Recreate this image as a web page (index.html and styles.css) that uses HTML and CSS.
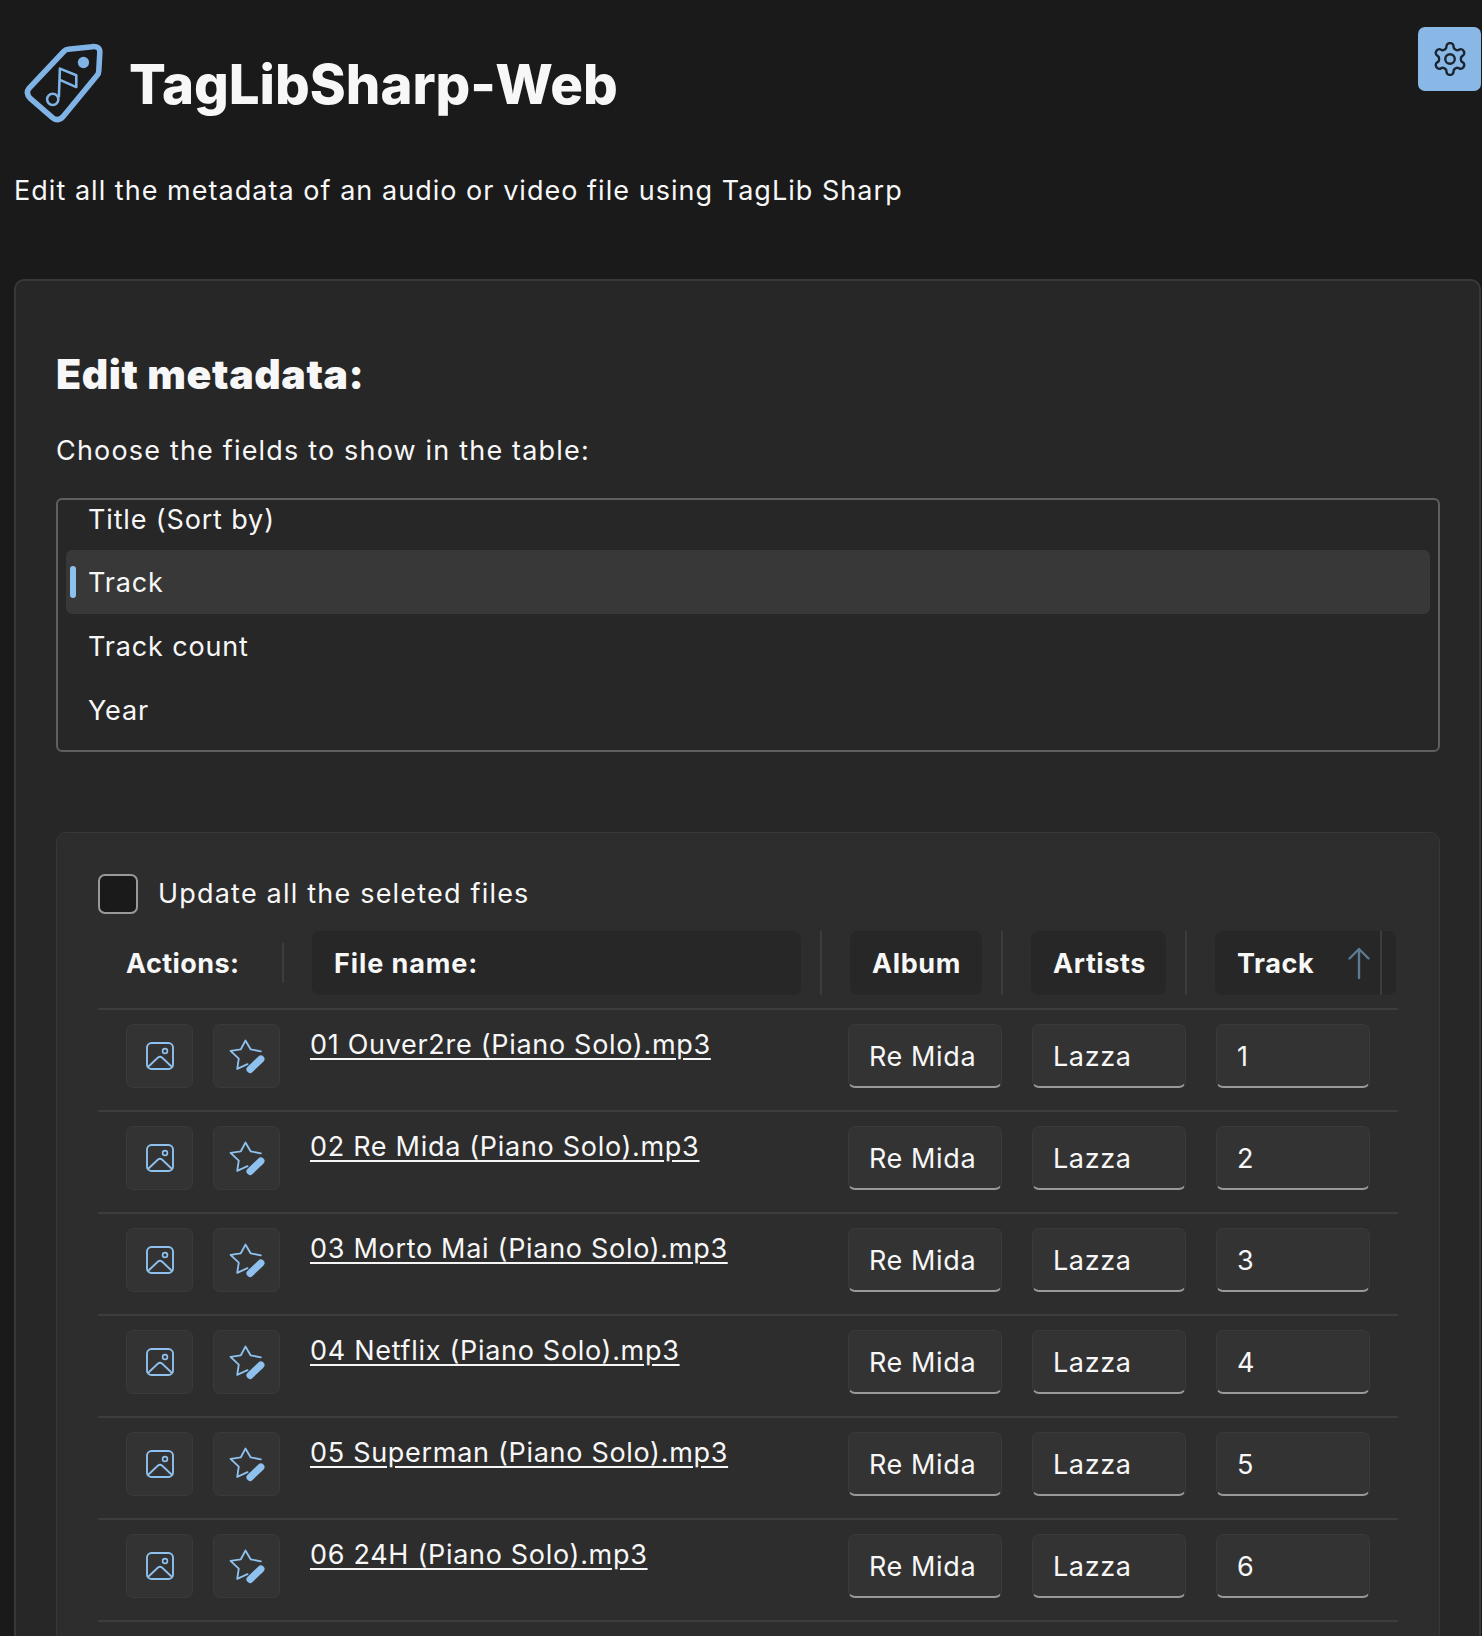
FILE: index.html
```html
<!DOCTYPE html>
<html lang="en">
<head>
    <meta charset="UTF-8">
    <title>TagLibSharp-Web</title>
    <link rel="stylesheet" href="styles.css">
</head>
<body>
    <svg width="0" height="0" class="defs">
        <symbol id="ico-image" viewBox="0 0 28 28">
            <rect x="1" y="1" width="26" height="26" rx="4.5" fill="none" stroke="currentColor" stroke-width="1.9"/>
            <circle cx="19" cy="9" r="2.4" fill="none" stroke="currentColor" stroke-width="1.7"/>
            <path d="M2 25 L12 15.500 Q14 14 16 15.500 L26 25" fill="none" stroke="currentColor" stroke-width="1.8"/>
        </symbol>
        <symbol id="ico-star" viewBox="0 0 36 36">
            <path d="M18 25.500 L8 30 L9.500 20 L1.500 12.500 L11.500 11 L16 2.500 L21 11 L31 13" fill="none" stroke="currentColor" stroke-width="1.800" stroke-linejoin="round" stroke-linecap="round"/>
            <path d="M20.500 30.500 L31 20.500" fill="none" stroke="currentColor" stroke-width="7" stroke-linecap="round"/>
        </symbol>
    </svg>

    <button class="settings" type="button" aria-label="Settings">
        <svg width="38" height="38" viewBox="0 0 24 24" fill="none" stroke="#1a2530" stroke-width="1.5" stroke-linejoin="round">
            <path d="M12.22 2h-.44a2 2 0 0 0-2 2v.18a2 2 0 0 1-1 1.73l-.43.25a2 2 0 0 1-2 0l-.15-.08a2 2 0 0 0-2.73.73l-.22.38a2 2 0 0 0 .73 2.73l.15.1a2 2 0 0 1 1 1.72v.51a2 2 0 0 1-1 1.74l-.15.09a2 2 0 0 0-.73 2.73l.22.38a2 2 0 0 0 2.73.73l.15-.08a2 2 0 0 1 2 0l.43.25a2 2 0 0 1 1 1.73V20a2 2 0 0 0 2 2h.44a2 2 0 0 0 2-2v-.18a2 2 0 0 1 1-1.73l.43-.25a2 2 0 0 1 2 0l.15.08a2 2 0 0 0 2.73-.73l.22-.39a2 2 0 0 0-.73-2.73l-.15-.08a2 2 0 0 1-1-1.74v-.5a2 2 0 0 1 1-1.74l.15-.09a2 2 0 0 0 .73-2.73l-.22-.38a2 2 0 0 0-2.73-.73l-.15.08a2 2 0 0 1-2 0l-.43-.25a2 2 0 0 1-1-1.73V4a2 2 0 0 0-2-2z"/>
            <circle cx="12" cy="12" r="3"/>
        </svg>
    </button>

    <header class="top">
        <svg class="logo" width="86" height="86" viewBox="22 42 84 84" fill="none" stroke="#80b4e6">
            <path d="M68 50 L92 47.500 Q99 47 99 53 L98 71 Q98 74 96 76 L63 116 Q58 121 53 117 L31 98 Q26 93 30 88 L64 52 Q66 50 68 50 Z" stroke-width="5.400" stroke-linejoin="round"/>
            <circle cx="83" cy="63" r="5.500" fill="#80b4e6" stroke="none"/>
            <circle cx="53" cy="99" r="5.500" stroke-width="2.500"/>
            <path d="M59 97 L60 69 L76 75.500 L76 87 L60 80" stroke-width="2.500" stroke-linejoin="round"/>
        </svg>
        <h1>TagLibSharp-Web</h1>
    </header>
    <p class="subtitle">Edit all the metadata of an audio or video file using TagLib Sharp</p>

    <main class="card">
        <h2>Edit metadata:</h2>
        <p class="hint">Choose the fields to show in the table:</p>

        <div class="listbox">
            <div class="option option-cut">Title (Sort by)</div>
            <div class="option selected">Track</div>
            <div class="option">Track count</div>
            <div class="option">Year</div>
        </div>

        <section class="inner">
            <label class="check">
                <span class="box"></span>
                Update all the seleted files
            </label>

            <table>
                <colgroup>
                    <col class="c-actions">
                    <col class="c-file">
                    <col class="c-album">
                    <col class="c-artists">
                    <col class="c-track">
                </colgroup>
                <thead>
                    <tr>
                        <th>
                            <div class="th-wrap wrap-actions">
                                <span class="th-label plain">Actions:</span>
                                <i class="divider"></i>
                            </div>
                        </th>
                        <th>
                            <div class="th-wrap wrap-file">
                                <span class="th-label">File name:</span>
                                <i class="divider"></i>
                            </div>
                        </th>
                        <th>
                            <div class="th-wrap">
                                <span class="th-label">Album</span>
                                <i class="divider"></i>
                            </div>
                        </th>
                        <th>
                            <div class="th-wrap wrap-artists">
                                <span class="th-label">Artists</span>
                                <i class="divider"></i>
                            </div>
                        </th>
                        <th>
                            <div class="th-wrap wrap-track">
                                <span class="th-label sorted">
                                    Track
                                    <svg width="24" height="34" viewBox="0 0 24 34" fill="none" stroke="#5b7a94" stroke-width="2.400" stroke-linecap="round" stroke-linejoin="round"><path d="M12 32 V3 M2.500 12.500 L12 3 L21.500 12.500"/></svg>
                                </span>
                                <i class="divider"></i>
                                <span class="th-tail"></span>
                            </div>
                        </th>
                    </tr>
                </thead>
                <tbody>
                    <tr>
                        <td><div class="acts"><button type="button" class="act"><svg class="i-img"><use href="#ico-image"/></svg></button><button type="button" class="act"><svg class="i-star"><use href="#ico-star"/></svg></button></div></td>
                        <td class="file"><a href="#">01 Ouver2re (Piano Solo).mp3</a></td>
                        <td class="f-album"><input type="text" value="Re Mida"></td>
                        <td class="f-artists"><input type="text" value="Lazza"></td>
                        <td class="f-track"><input type="text" value="1"></td>
                    </tr>
                    <tr>
                        <td><div class="acts"><button type="button" class="act"><svg class="i-img"><use href="#ico-image"/></svg></button><button type="button" class="act"><svg class="i-star"><use href="#ico-star"/></svg></button></div></td>
                        <td class="file"><a href="#">02 Re Mida (Piano Solo).mp3</a></td>
                        <td class="f-album"><input type="text" value="Re Mida"></td>
                        <td class="f-artists"><input type="text" value="Lazza"></td>
                        <td class="f-track"><input type="text" value="2"></td>
                    </tr>
                    <tr>
                        <td><div class="acts"><button type="button" class="act"><svg class="i-img"><use href="#ico-image"/></svg></button><button type="button" class="act"><svg class="i-star"><use href="#ico-star"/></svg></button></div></td>
                        <td class="file"><a href="#">03 Morto Mai (Piano Solo).mp3</a></td>
                        <td class="f-album"><input type="text" value="Re Mida"></td>
                        <td class="f-artists"><input type="text" value="Lazza"></td>
                        <td class="f-track"><input type="text" value="3"></td>
                    </tr>
                    <tr>
                        <td><div class="acts"><button type="button" class="act"><svg class="i-img"><use href="#ico-image"/></svg></button><button type="button" class="act"><svg class="i-star"><use href="#ico-star"/></svg></button></div></td>
                        <td class="file"><a href="#">04 Netflix (Piano Solo).mp3</a></td>
                        <td class="f-album"><input type="text" value="Re Mida"></td>
                        <td class="f-artists"><input type="text" value="Lazza"></td>
                        <td class="f-track"><input type="text" value="4"></td>
                    </tr>
                    <tr>
                        <td><div class="acts"><button type="button" class="act"><svg class="i-img"><use href="#ico-image"/></svg></button><button type="button" class="act"><svg class="i-star"><use href="#ico-star"/></svg></button></div></td>
                        <td class="file"><a href="#">05 Superman (Piano Solo).mp3</a></td>
                        <td class="f-album"><input type="text" value="Re Mida"></td>
                        <td class="f-artists"><input type="text" value="Lazza"></td>
                        <td class="f-track"><input type="text" value="5"></td>
                    </tr>
                    <tr>
                        <td><div class="acts"><button type="button" class="act"><svg class="i-img"><use href="#ico-image"/></svg></button><button type="button" class="act"><svg class="i-star"><use href="#ico-star"/></svg></button></div></td>
                        <td class="file"><a href="#">06 24H (Piano Solo).mp3</a></td>
                        <td class="f-album"><input type="text" value="Re Mida"></td>
                        <td class="f-artists"><input type="text" value="Lazza"></td>
                        <td class="f-track"><input type="text" value="6"></td>
                    </tr>
                </tbody>
            </table>
        </section>
    </main>
</body>
</html>
```

FILE: styles.css
```css
*{ box-sizing: border-box; }
html, body{ margin: 0; padding: 0; height: 100vh; overflow: hidden; }
body{
    background-color: #1a1a1a;
    color: #f7f7f7;
    font-family: "Inter", "Liberation Sans", sans-serif;
    font-size: 27px;
    letter-spacing: 0.6px;
}
.defs{ position: absolute; }

.settings{
    position: absolute;
    top: 27px;
    right: 1px;
    width: 63px;
    height: 64px;
    display: flex;
    align-items: center;
    justify-content: center;
    padding: 0;
    background: #8ab8e6;
    border: none;
    border-radius: 7px;
}

.top{
    display: flex;
    align-items: center;
    padding: 42px 0 0 21px;
    height: 126px;
}
.logo{ flex: none; }
h1{
    margin: 0 0 0 22px;
    font-size: 54.500px;
    font-weight: 800;
    letter-spacing: 0;
}
.subtitle{
    margin: 0;
    padding: 49px 0 0 14px;
    line-height: 32px;
    letter-spacing: 1.03px;
}

.card{
    margin: 72px 1px 0 14px;
    padding: 0 39px 0 40px;
    height: 1400px;
    background: #272727;
    border: 2px solid #383838;
    border-radius: 10px;
}
h2{
    margin: 0;
    padding-top: 70px;
    font-size: 41px;
    line-height: 46px;
    font-weight: 900;
    letter-spacing: 0.6px;
}
.hint{
    margin: 0;
    padding-top: 38px;
    line-height: 32px;
    letter-spacing: 1.18px;
}

.listbox{
    margin-top: 31px;
    height: 254px;
    padding: 0 8px;
    border: 2px solid #5f5f5f;
    border-radius: 6px;
    overflow: hidden;
    letter-spacing: 0.85px;
}
.option{
    height: 64px;
    line-height: 66px;
    padding-left: 22px;
    border-radius: 6px;
}
.option-cut{
    height: 50px;
    line-height: 40px;
}
.selected{
    position: relative;
    background: #383838;
}
.selected::before{
    content: "";
    position: absolute;
    left: 4px;
    top: 16px;
    width: 6px;
    height: 32px;
    border-radius: 3px;
    background: #8fc1ee;
}

.inner{
    margin-top: 80px;
    padding: 40px 41px 0;
    height: 900px;
    background: #2d2d2d;
    border: 1px solid #383838;
    border-radius: 10px;
}
.check{
    display: flex;
    align-items: center;
    gap: 20px;
    height: 41px;
    letter-spacing: 1.2px;
}
.box{
    width: 40px;
    height: 40px;
    background: #1a1a1a;
    border: 2px solid #999;
    border-radius: 7px;
}

table{
    width: 1300px;
    margin-top: 17px;
    table-layout: fixed;
    border-collapse: collapse;
}
.c-actions{ width: 200px; }
.c-file{ width: 538px; }
.c-album{ width: 181px; }
.c-artists{ width: 183px; }
.c-track{ width: 198px; }

th{
    padding: 0 0 13px;
    border-bottom: 2px solid #3d3d3d;
    text-align: left;
    font-weight: 700;
}
.th-wrap{
    display: flex;
    align-items: stretch;
    height: 64px;
    padding-left: 14px;
    padding-right: 14px;
}
.th-label{
    flex: 1;
    display: flex;
    align-items: center;
    justify-content: space-between;
    padding: 0 20px 0 22px;
    margin-right: 19px;
    background: #272727;
    border-radius: 8px;
}
.th-label.plain{
    background: none;
    padding-left: 14px;
    padding-right: 0;
    letter-spacing: 0.4px;
}
.divider{
    flex: none;
    width: 2px;
    height: 64px;
    background: #3d3d3d;
}
.wrap-actions .divider{
    align-self: center;
    height: 40px;
}
.wrap-file{ letter-spacing: 0.9px; }
.wrap-artists{ padding-right: 13px; }
.wrap-track{
    padding-left: 15px;
    padding-right: 2px;
}
.th-label.sorted{
    margin-right: 0;
    padding-right: 9px;
    background: #272727;
    border-radius: 8px 0 0 8px;
}
.th-tail{
    width: 14px;
    background: #272727;
    border-radius: 0 8px 8px 0;
}

td{
    height: 102px;
    padding: 14px 0 0;
    border-bottom: 2px solid #3d3d3d;
    vertical-align: top;
}
.acts{
    display: flex;
    gap: 20px;
    padding-left: 28px;
}
.act{
    width: 67px;
    height: 64px;
    display: flex;
    align-items: center;
    justify-content: center;
    padding: 0;
    background: #333;
    border: 1px solid #3a3a3a;
    border-radius: 7px;
    color: #8fc1ee;
}
.i-img{ width: 28px; height: 28px; }
.i-star{ width: 37px; height: 37px; margin-left: 1px; }

.file{
    padding-top: 19px;
    padding-left: 12px;
    line-height: 32px;
    letter-spacing: 0.7px;
}
.file a{
    color: #f7f7f7;
    text-decoration: underline;
    text-underline-offset: 4px;
}

input{
    display: block;
    width: 154px;
    height: 64px;
    padding: 2px 0 0 20px;
    background: #333;
    color: #f7f7f7;
    font: inherit;
    letter-spacing: inherit;
    border: 1px solid #3a3a3a;
    border-bottom: 2px solid #999;
    border-radius: 7px;
    outline: none;
}
.f-album{ padding-left: 12px; }
.f-artists{ padding-left: 15px; }
.f-track{ padding-left: 16px; }
```
